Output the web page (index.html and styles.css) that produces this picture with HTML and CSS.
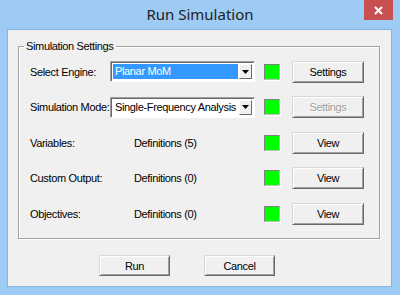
FILE: index.html
```html
<!DOCTYPE html>
<html lang="en">
<head>
    <meta charset="UTF-8">
    <title>Run Simulation</title>
    <link rel="stylesheet" href="styles.css">
</head>
<body>

    <div class="window">
        <div class="titlebar">
            <span></span>
            <h1 class="title">Run Simulation</h1>
            <button class="close" aria-label="Close">
                <svg width="9" height="9" viewBox="0 0 9 9"><path d="M1 1L8 8M8 1L1 8" stroke="#fff" stroke-width="2"/></svg>
            </button>
        </div>

        <div class="client">
            <div class="group">
                <div class="group-title">Simulation Settings</div>
                <div class="rows">
                    <div class="row">
                        <span class="label">Select Engine:</span>
                        <div class="combo">
                            <span class="combo-value selected">Planar MoM</span>
                            <span class="combo-btn"><svg width="7" height="4" viewBox="0 0 7 4"><path d="M0 0H7L3.5 4Z" fill="#000"/></svg></span>
                        </div>
                        <span class="status"></span>
                        <button class="btn">Settings</button>
                    </div>
                    <div class="row">
                        <span class="label">Simulation Mode:</span>
                        <div class="combo">
                            <span class="combo-value">Single-Frequency Analysis</span>
                            <span class="combo-btn"><svg width="7" height="4" viewBox="0 0 7 4"><path d="M0 0H7L3.5 4Z" fill="#000"/></svg></span>
                        </div>
                        <span class="status"></span>
                        <button class="btn" disabled>Settings</button>
                    </div>
                    <div class="row">
                        <span class="label">Variables:</span>
                        <span class="info">Definitions (5)</span>
                        <span class="status"></span>
                        <button class="btn">View</button>
                    </div>
                    <div class="row">
                        <span class="label">Custom Output:</span>
                        <span class="info">Definitions (0)</span>
                        <span class="status"></span>
                        <button class="btn">View</button>
                    </div>
                    <div class="row">
                        <span class="label">Objectives:</span>
                        <span class="info">Definitions (0)</span>
                        <span class="status"></span>
                        <button class="btn">View</button>
                    </div>
                </div>
            </div>

            <div class="actions">
                <button class="btn">Run</button>
                <button class="btn">Cancel</button>
            </div>
        </div>
    </div>

</body>
</html>
```

FILE: styles.css
```css
* {
    margin: 0;
    padding: 0;
    box-sizing: border-box;
}

body {
    width: 400px;
    height: 295px;
    overflow: hidden;
    background-color: #9dcbf3;
    font-family: "Liberation Sans", Arial, sans-serif;
    font-size: 11px;
    letter-spacing: -0.35px;
    color: #000;
}

.window {
    display: flex;
    flex-direction: column;
    height: 295px;
}

/* Barra de titulo */
.titlebar {
    display: grid;
    grid-template-columns: 1fr auto 1fr;
    align-items: start;
    height: 29px;
}

.title {
    font-family: "Noto Sans", "Open Sans", sans-serif;
    font-size: 15px;
    font-weight: normal;
    letter-spacing: 0;
    color: #222;
    line-height: 29px;
}

.close {
    justify-self: end;
    width: 29px;
    height: 20px;
    margin-right: 7px;
    border: none;
    background-color: #c75050;
    display: flex;
    align-items: center;
    justify-content: center;
}

/* Area do dialogo */
.client {
    flex: 1;
    margin: 0 8px 8px 7px;
    border: 1px solid #86b4df;
    background-color: #f0f0f0;
    padding: 16px 11px 0 10px;
}

.group {
    height: 193px;
    border: 1px solid #a0a0a0;
    box-shadow: inset 1px 1px 0 #fff, 1px 1px 0 #fff;
}

.group-title {
    width: fit-content;
    margin: -7px 0 0 5px;
    padding: 0 2px;
    line-height: 13px;
    background-color: #f0f0f0;
}

.rows {
    padding: 1px 0 0 11px;
}

.row {
    display: flex;
    align-items: center;
    height: 35.5px;
    white-space: nowrap;
}

.label {
    width: 80px;
}

.combo {
    display: flex;
    width: 145px;
    height: 21px;
    padding: 2px;
    border: 1px solid;
    border-color: #a0a0a0 #fff #fff #a0a0a0;
    box-shadow: inset 1px 1px 0 #696969;
    background-color: #fff;
}

.combo-value {
    flex: 1;
    padding-left: 2px;
    line-height: 15px;
    overflow: hidden;
}

.combo-value.selected {
    background-color: #3399ff;
    color: #fff;
    margin-right: 1px;
}

.combo-btn {
    width: 13px;
    display: flex;
    align-items: center;
    justify-content: center;
    background-color: #f0f0f0;
    border: 1px solid;
    border-color: #fff #696969 #696969 #fff;
}

.info {
    width: 145px;
    padding-left: 24px;
}

.status {
    width: 16px;
    height: 16px;
    margin-left: 9px;
    background-color: #00ff00;
    border: 1px solid;
    border-color: #808080 #c0c0c0 #c0c0c0 #808080;
    box-shadow: 1px 1px 0 #fff;
}

.btn {
    width: 72px;
    height: 22px;
    margin-left: 12px;
    font-family: "Liberation Sans", Arial, sans-serif;
    font-size: 11px;
    letter-spacing: -0.35px;
    color: #000;
    background-color: #f0f0f0;
    border: 1px solid;
    border-color: #d8d8d8 #696969 #696969 #d8d8d8;
    box-shadow: inset 1px 1px 0 #fff, inset -1px -1px 0 #a0a0a0;
}

.btn:disabled {
    color: #a0a0a0;
    text-shadow: 1px 1px 0 #fff;
}

/* Botoes inferiores */
.actions {
    display: flex;
    gap: 34px;
    padding: 16px 0 0 81px;
}

.actions .btn {
    width: 71px;
    height: 21px;
    margin-left: 0;
}
```
